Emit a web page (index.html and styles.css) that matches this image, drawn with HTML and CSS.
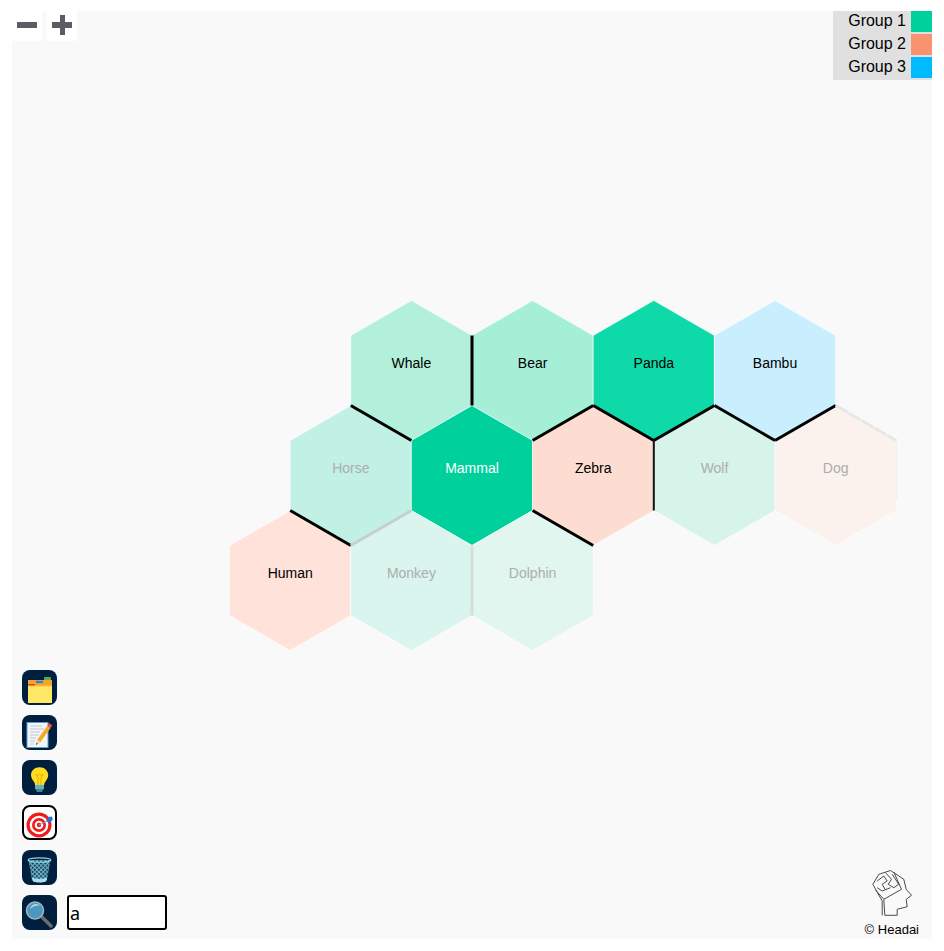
FILE: index.html
```html
<!DOCTYPE html>
<html lang="en">
<head>
    <meta charset="UTF-8">
    <meta name="viewport" content="width=device-width, initial-scale=1.0">
    <title>Headai Graph</title>
    <link rel="stylesheet" href="styles.css">
</head>
<body>

<div class="canvas">

    <!-- Hexagon map, viewBox uses page coordinates -->
    <svg class="map" viewBox="12 11 920 928" width="920" height="928">
        <defs>
            <polygon id="hex" points="0,-70 60.62,-35 60.62,35 0,70 -60.62,35 -60.62,-35"/>
        </defs>

        <g transform="translate(411.4 370.5)"><use href="#hex" class="hex whale"/><text class="label" y="-3">Whale</text></g>
        <g transform="translate(532.6 370.5)"><use href="#hex" class="hex bear"/><text class="label" y="-3">Bear</text></g>
        <g transform="translate(653.8 370.5)"><use href="#hex" class="hex panda"/><text class="label" y="-3">Panda</text></g>
        <g transform="translate(775 370.5)"><use href="#hex" class="hex bambu"/><text class="label" y="-3">Bambu</text></g>

        <g transform="translate(350.8 475.5)"><use href="#hex" class="hex horse"/><text class="label dim" y="-3">Horse</text></g>
        <g transform="translate(472 475.5)"><use href="#hex" class="hex mammal"/><text class="label main" y="-3">Mammal</text></g>
        <g transform="translate(593.2 475.5)"><use href="#hex" class="hex zebra"/><text class="label" y="-3">Zebra</text></g>
        <g transform="translate(714.5 475.5)"><use href="#hex" class="hex wolf"/><text class="label dim" y="-3">Wolf</text></g>
        <g transform="translate(835.7 475.5)"><use href="#hex" class="hex dog"/><text class="label dim" y="-3">Dog</text></g>

        <g transform="translate(290.2 580.5)"><use href="#hex" class="hex human"/><text class="label" y="-3">Human</text></g>
        <g transform="translate(411.4 580.5)"><use href="#hex" class="hex monkey"/><text class="label dim" y="-3">Monkey</text></g>
        <g transform="translate(532.6 580.5)"><use href="#hex" class="hex dolphin"/><text class="label dim" y="-3">Dolphin</text></g>

        <!-- Links between neighbours -->
        <line class="edge" x1="350.8" y1="405.5" x2="411.4" y2="440.5"/>
        <line class="edge" x1="472" y1="335.5" x2="472" y2="405.5"/>
        <line class="edge" x1="532.6" y1="440.5" x2="593.2" y2="405.5"/>
        <line class="edge" x1="593.2" y1="405.5" x2="653.8" y2="440.5"/>
        <line class="edge" x1="653.8" y1="440.5" x2="714.5" y2="405.5"/>
        <line class="edge" x1="714.5" y1="405.5" x2="775" y2="440.5"/>
        <line class="edge" x1="775" y1="440.5" x2="835.7" y2="405.5"/>
        <line class="edge thin" x1="653.8" y1="440.5" x2="653.8" y2="510.5"/>
        <line class="edge" x1="532.6" y1="510.5" x2="593.2" y2="545.5"/>
        <line class="edge" x1="290.2" y1="510.5" x2="350.8" y2="545.5"/>
        <line class="edge faint" x1="350.8" y1="545.5" x2="411.4" y2="510.5"/>
        <line class="edge fainter" x1="472" y1="545.5" x2="472" y2="615.5"/>
        <line class="edge ghost" x1="835.7" y1="405.5" x2="896.3" y2="440.5"/>
        <line class="edge mint" x1="896.6" y1="440.5" x2="896.6" y2="500"/>
    </svg>

    <!-- Zoom buttons -->
    <div class="zoom-btns">
        <div class="zoom-btn">
            <svg width="30" height="30" viewBox="0 0 30 30"><rect class="zoom-mark" x="5" y="11" width="20" height="6"/></svg>
        </div>
        <div class="zoom-btn">
            <svg width="30" height="30" viewBox="0 0 30 30"><path class="zoom-mark" d="M5 11h8V4h5v7h7v6h-7v7h-5v-7H5z"/></svg>
        </div>
    </div>

    <!-- Legend -->
    <div class="legend">
        <div class="legend-row">Group 1<span class="swatch group1"></span></div>
        <div class="legend-row">Group 2<span class="swatch group2"></span></div>
        <div class="legend-row">Group 3<span class="swatch group3"></span></div>
    </div>

    <!-- Tools -->
    <div class="tools">
        <div class="tool">
            <svg viewBox="0 0 35 35">
                <rect x="22" y="7" width="7" height="4" rx="1" fill="#4caf50"/>
                <rect x="6" y="10" width="24" height="6" fill="#f9a12e"/>
                <rect x="14" y="10.8" width="7" height="2.4" fill="#1e88e5"/>
                <rect x="6.3" y="14" width="6.5" height="2.6" fill="#e53a2a"/>
                <rect x="6" y="16" width="24" height="17" fill="#ffe866"/>
                <rect x="6" y="15.4" width="24" height="1" fill="#fbc02d"/>
            </svg>
        </div>
        <div class="tool">
            <svg viewBox="0 0 35 35">
                <rect x="5" y="7.5" width="21" height="25" fill="#f2f6fa" stroke="#5b9bd5" stroke-width="1"/>
                <path d="M8 11h12M8 14h14M8 17h10M8 20h9M8 23h6M8 26h5M8 29h4" stroke="#b5bcc4" stroke-width="0.8"/>
                <path d="M14 30l1.5-5.5L25.5 10.5l3 2.5-10 14z" fill="#f9a825"/>
                <path d="M14 30l1.5-5.5 3 2.5z" fill="#f5deb3"/>
                <path d="M14 30l.6-2.2 1.2 1z" fill="#444"/>
                <path d="M25.5 10.5l1.7-2.4 3 2.5-1.7 2.4z" fill="#ef5350"/>
            </svg>
        </div>
        <div class="tool">
            <svg viewBox="0 0 35 35">
                <path d="M17.5 7.3c-4.8 0-8.5 3.5-8.5 8 0 3.5 2.5 5.5 3.5 7.5.5 1 .6 1.7.6 2.5h9c0-.8.1-1.5.6-2.500 1-2 3.500-4 3.500-7.500 0-4.500-3.700-8-8.700-8z" fill="#ffdd22"/>
                <path d="M14 14l2 4v7M21 14l-2 4v7M14 14l1.700 1.500 1.800-1.500 1.800 1.500 1.700-1.500" fill="none" stroke="#e8a000" stroke-width="0.8"/>
                <rect x="13" y="25" width="9" height="4" fill="#5fb0c4"/>
                <path d="M13.500 29h8l-1.500 3h-5z" fill="#3f8497"/>
            </svg>
        </div>
        <div class="tool tool-light">
            <svg viewBox="0 0 31 31">
                <circle cx="15" cy="18" r="12.500" fill="#f01c1c"/>
                <circle cx="15" cy="18" r="9.300" fill="#fff"/>
                <circle cx="15" cy="18" r="7" fill="#f01c1c"/>
                <circle cx="15" cy="18" r="4.300" fill="#fff"/>
                <circle cx="15" cy="18" r="2.200" fill="#f01c1c"/>
                <path d="M15 18L25 13" stroke="#8aa" stroke-width="1"/>
                <path d="M22.500 13.500l2-3.500 3.500-.5.800 3-2 2.500-3 .5z" fill="#1e78d8"/>
            </svg>
        </div>
        <div class="tool">
            <svg viewBox="0 0 35 35">
                <defs>
                    <pattern id="mesh" width="3" height="3" patternUnits="userSpaceOnUse" patternTransform="rotate(45)">
                        <rect width="3" height="3" fill="#6fb4c8"/>
                        <rect x="1" y="1" width="2" height="2" fill="#1d4560"/>
                    </pattern>
                </defs>
                <path d="M6.500 10l3.500 20c.3 1.500 3.500 2.500 7.500 2.500s7.200-1 7.500-2.500l3.500-20z" fill="url(#mesh)"/>
                <ellipse cx="17.500" cy="10" rx="11.300" ry="2.200" fill="none" stroke="#8fd0e0" stroke-width="1.300"/>
                <path d="M10 27.500c3 1.800 12 1.800 15 0l-.5 2.800c-.3 1.400-3 2.200-7 2.200s-6.700-.8-7-2.200z" fill="#a9e0ea"/>
            </svg>
        </div>
        <div class="search-row">
            <div class="tool">
                <svg viewBox="0 0 35 35">
                    <path d="M19 21l10 10" stroke="#6d6d6d" stroke-width="3.500" stroke-linecap="round"/>
                    <circle cx="13" cy="15.500" r="8.500" fill="#4b97bf" stroke="#a9b4ba" stroke-width="1.500"/>
                    <path d="M8 14c.5-3 3-5 6-5 1.500 0 3 .5 4 1.500-3-.5-7 .5-10 3.500z" fill="#a8d6ea"/>
                </svg>
            </div>
            <input class="search" type="text" value="a">
        </div>
    </div>

    <!-- Logo -->
    <div class="brand">
        <svg class="brand-logo" width="41" height="47" viewBox="0 0 41 47">
            <g fill="none" stroke="#4a4a4a" stroke-width="1">
                <path d="M11.200 45.300V31L1.800 14.300 7.800 4.300 19.500 .5 32.800 9.300l2.400 10 5.300 6-5.300 4 1 7.400-10 2.600v6H13.800L12.800 29.300 4.500 20"/>
                <path d="M12.800 29.300l17.700-10L22.800 2"/>
                <path d="M6.200 11l6.600-5 3.400 5-5 3.300 3.300 5.700M14.500 2.700l6 6.600-3.300 5 5.600 3.400M6.200 17.700l5 3.300 8.300-3.300M21.200 4.300l6.600 10-5 3.400"/>
            </g>
        </svg>
        <div class="brand-name">© Headai</div>
    </div>

</div>

</body>
</html>
```

FILE: styles.css
```css
body {
    margin: 11px 12px 12px;
    background-color: #fff;
    font-family: "Liberation Sans", Arial, sans-serif;
}
.canvas {
    position: relative;
    width: 920px;
    height: 928px;
    background-color: #f9f9f9;
}
.map {
    position: absolute;
    top: 0;
    left: 0;
}
.hex {
    stroke: #fff;
    stroke-width: 0.6;
}
.whale { fill: #b2f0dc; }
.bear { fill: #a6efd7; }
.panda { fill: #0dd9a9; }
.bambu { fill: #c9efff; }
.horse { fill: #c0f1e4; }
.mammal { fill: #00d19c; }
.zebra { fill: #fdddd2; }
.wolf { fill: #d6f4ea; }
.dog { fill: #fbf1ed; }
.human { fill: #ffe3da; }
.monkey { fill: #daf5ed; }
.dolphin { fill: #e0f6ef; }
.label {
    font-size: 14px;
    text-anchor: middle;
    fill: #000;
}
.label.dim {
    fill: #adadad;
}
.label.main {
    fill: #fff;
}
.edge {
    stroke: #000;
    stroke-width: 3;
}
.edge.thin {
    stroke-width: 2;
    stroke: #111;
}
.edge.faint {
    stroke: #c6cfcb;
}
.edge.fainter {
    stroke: #d6dedb;
}
.edge.ghost {
    stroke: #e6e8e5;
    stroke-dasharray: 14 1;
}
.edge.mint {
    stroke: #e6f6f0;
    stroke-width: 1;
}
.zoom-btns {
    position: absolute;
    top: 0;
    left: 0;
    display: flex;
    gap: 5px;
}
.zoom-btn {
    width: 30px;
    height: 30px;
    background-color: #fff;
}
.zoom-mark {
    fill: #5c5c66;
}
.legend {
    position: absolute;
    top: 0;
    right: 0;
    width: 99px;
    height: 69px;
    background-color: #e0e0e0;
    font-size: 16px;
    color: #000;
}
.legend-row {
    display: flex;
    justify-content: flex-end;
    align-items: flex-start;
    gap: 5px;
    height: 23px;
    line-height: 19px;
}
.swatch {
    width: 21px;
    height: 21px;
}
.group1 { background-color: #00d19c; }
.group2 { background-color: #f99270; }
.group3 { background-color: #00bbff; }
.tools {
    position: absolute;
    left: 10px;
    bottom: 9px;
    display: flex;
    flex-direction: column;
    gap: 10px;
}
.tool {
    width: 35px;
    height: 35px;
    box-sizing: border-box;
    border-radius: 8px;
    background-color: #001f3f;
}
.tool svg {
    display: block;
    width: 100%;
    height: 100%;
}
.tool-light {
    background-color: #fff;
    border: 2px solid #000;
}
.search-row {
    display: flex;
    gap: 10px;
}
.search {
    box-sizing: border-box;
    width: 100px;
    height: 35px;
    padding: 1px;
    border: 2px solid #000;
    border-radius: 3px;
    background-color: #fff;
    font-family: "Noto Sans", sans-serif;
    font-size: 18px;
}
.brand {
    position: absolute;
    right: 13px;
    bottom: 2px;
    display: flex;
    flex-direction: column;
    align-items: center;
}
.brand-logo {
    display: block;
    margin-bottom: 5px;
}
.brand-name {
    font-size: 13px;
    color: #000;
}
```
